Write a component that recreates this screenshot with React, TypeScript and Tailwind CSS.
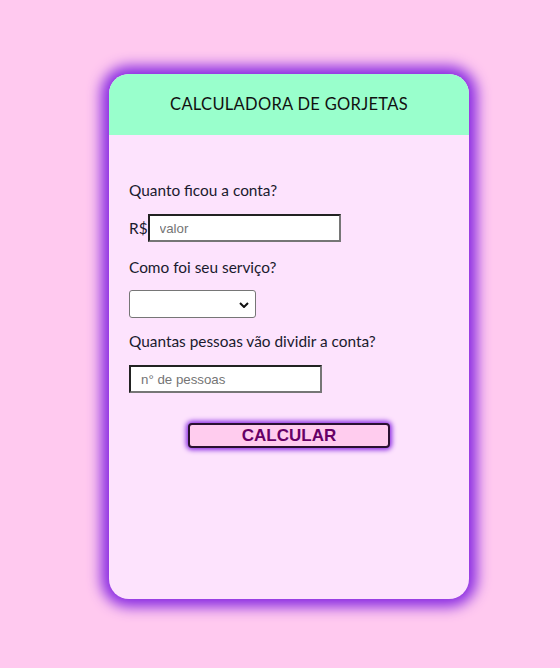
export default function App() {
  return (
    <div className="min-h-[668px] w-full bg-[#ffc9ef] pt-[74px]" style={{ fontFamily: "Lato, 'Noto Sans', sans-serif" }}>
      <div className="ml-[109px] flex h-[525px] w-[360px] flex-col overflow-hidden rounded-[20px] bg-[#fde3fd] shadow-[0_0_14px_8px_#8a2be2]">
        {/* Header */}
        <div className="flex h-[61px] items-center justify-center bg-[#99ffcc] text-[16.5px] tracking-[0.3px] text-[#111]">
          CALCULADORA DE GORJETAS
        </div>

        {/* Form */}
        <div className="flex flex-col px-5 text-[15.4px] text-[#1a1a2e]">
          <p className="mt-[45px] leading-5">Quanto ficou a conta?</p>
          <div className="mt-[14px] flex items-center">
            <span className="leading-5">R$</span>
            <input
              placeholder="valor"
              className="h-[28px] w-[193px] border-2 border-[#767676] border-l-[#222] border-t-[#222] bg-white px-[10px] text-[13.3px] placeholder:text-[#757575]"
              style={{ fontFamily: "'Liberation Sans', Arial, sans-serif" }}
            />
          </div>

          <p className="mt-[15px] leading-5">Como foi seu serviço?</p>
          <div className="relative mt-[13px] h-[28px] w-[127px] rounded-[3px] border border-[#767676] bg-white">
            <svg viewBox="0 0 10 6" className="absolute right-[6px] top-[11px] h-[6px] w-[10px]">
              <path d="M1 1l4 4 4-4" fill="none" stroke="#111" strokeWidth={2} />
            </svg>
          </div>

          <p className="mt-[13px] leading-5">Quantas pessoas vão dividir a conta?</p>
          <input
            placeholder="n° de pessoas"
            className="mt-[14px] h-[28px] w-[193px] border-2 border-[#767676] border-l-[#222] border-t-[#222] bg-white px-[10px] text-[13.3px] placeholder:text-[#757575]"
            style={{ fontFamily: "'Liberation Sans', Arial, sans-serif" }}
          />

          <button
            className="mx-auto mt-[30px] flex h-[25px] w-[202px] items-center justify-center rounded-[4px] border-2 border-[#2a1030] bg-[#ffccee] text-[17px] font-bold text-[#660066] shadow-[0_0_5px_2px_#8a2be2]"
            style={{ fontFamily: "'Liberation Sans', Arial, sans-serif" }}
          >
            CALCULAR
          </button>
        </div>
      </div>
    </div>
  );
}
